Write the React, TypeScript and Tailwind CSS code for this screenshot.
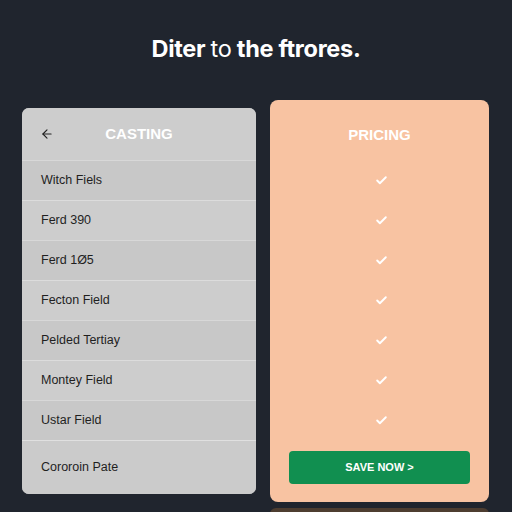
import { ArrowLeft, Check } from 'lucide-react';

const rows = [
  'Witch Fiels',
  'Ferd 390',
  'Ferd 1Ø5',
  'Fecton Field',
  'Pelded Tertiay',
  'Montey Field',
  'Ustar Field',
];

export default function App() {
  return (
    <div className="w-[512px] h-[512px] overflow-hidden bg-[#20252e] font-['Inter',sans-serif]">
      <h1 className="pt-[36px] h-[100px] text-center text-[23.5px] leading-[26px] font-bold text-white tracking-[-0.3px]">
        Diter <span className="font-normal">to</span> the ftrores.
      </h1>

      <div className="flex items-start gap-[14px] pl-[22px]">
        {/* left list */}
        <div className="mt-[8px] w-[234px] rounded-[7px] bg-[#cbcbcb] overflow-hidden font-['Liberation_Sans',Arial,sans-serif]">
          <div className="relative h-[52px] flex items-center justify-center bg-[#cdcdcd]">
            <ArrowLeft className="absolute left-[18px] w-[14px] h-[14px] text-[#222]" strokeWidth={2} />
            <span className="text-[15px] font-bold text-white">CASTING</span>
          </div>
          {rows.map((r, i) => (
            <div
              key={r}
              className={`h-[40px] flex items-center pl-[19px] border-t border-white/30 text-[12.5px] text-[#1f1f1f] ${
                i % 2 === 0 ? 'bg-[#c8c8c8]' : 'bg-[#cdcdcd]'
              }`}
            >
              {r}
            </div>
          ))}
          <div className="h-[54px] flex items-center pl-[19px] border-t border-white/40 text-[12.5px] text-[#1f1f1f] bg-[#cbcbcb]">
            Cororoin Pate
          </div>
        </div>

        {/* right pricing */}
        <div className="flex flex-col">
          <div className="w-[219px] rounded-[8px] bg-[#f8c3a2] font-['Liberation_Sans',Arial,sans-serif]">
            <div className="h-[60px] flex items-end justify-center pb-[14px] text-[15px] font-bold text-white">
              PRICING
            </div>
            {rows.map((r) => (
              <div key={r} className="h-[40px] flex items-center justify-center pl-[3px]">
                <Check className="w-[13px] h-[13px] text-white" strokeWidth={3.5} />
              </div>
            ))}
            <div className="pt-[11px] pb-[18px] px-[19px]">
              <button
                type="button"
                className="w-full h-[33px] rounded-[4px] bg-[#118f50] text-white text-[11px] font-semibold"
              >
                SAVE NOW &gt;
              </button>
            </div>
          </div>
          <div className="mt-[6px] h-[20px] w-[219px] rounded-t-[6px] bg-[#4d3d30]" />
        </div>
      </div>
    </div>
  );
}
